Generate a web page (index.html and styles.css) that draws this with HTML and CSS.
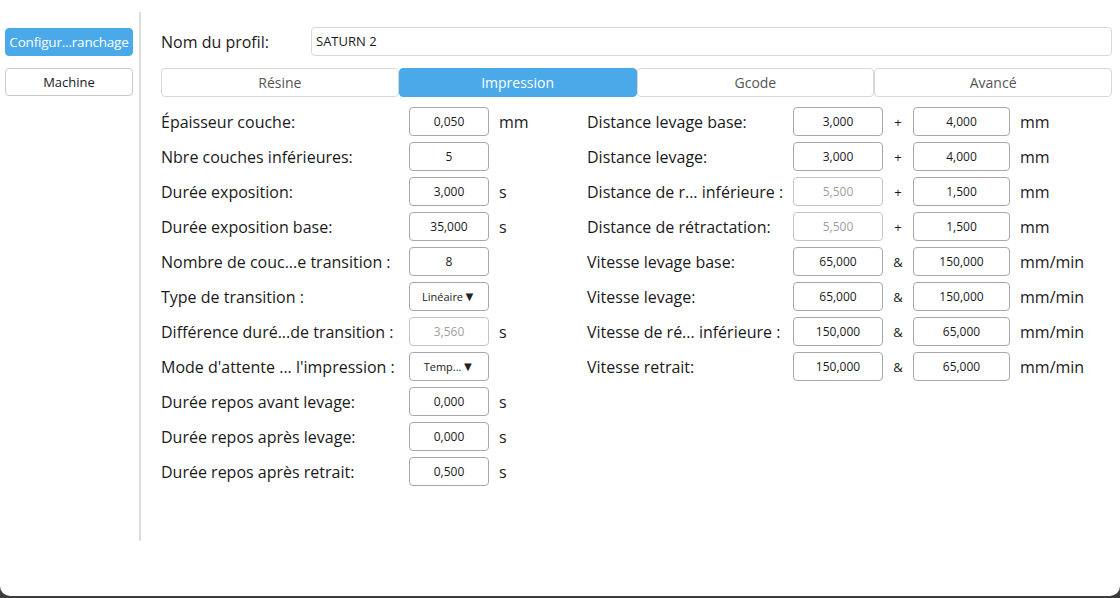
FILE: index.html
```html
<!DOCTYPE html>
<html lang="fr">
<head>
  <meta charset="UTF-8">
  <title>Configuration</title>
  <link rel="stylesheet" href="styles.css">
</head>
<body>
  <div class="window">
    <div class="sidebar">
      <div class="side-btn active">Configur...ranchage</div>
      <div class="side-btn">Machine</div>
    </div>
    <div class="divider"></div>
    <div class="main">
      <div class="profile">
        <span class="profile-label">Nom du profil:</span>
        <div class="profile-input">SATURN 2</div>
      </div>
      <div class="tabs">
        <div class="tab">Résine</div>
        <div class="tab active">Impression</div>
        <div class="tab">Gcode</div>
        <div class="tab">Avancé</div>
      </div>
      <div class="columns">
        <div class="col-left">
          <span class="lbl">Épaisseur couche:</span><div class="field">0,050</div><span class="unit">mm</span>
          <span class="lbl">Nbre couches inférieures:</span><div class="field">5</div><span class="unit"></span>
          <span class="lbl">Durée exposition:</span><div class="field">3,000</div><span class="unit">s</span>
          <span class="lbl">Durée exposition base:</span><div class="field">35,000</div><span class="unit">s</span>
          <span class="lbl">Nombre de couc...e transition :</span><div class="field">8</div><span class="unit"></span>
          <span class="lbl">Type de transition :</span><div class="field select">Linéaire<span class="arrow">▼</span></div><span class="unit"></span>
          <span class="lbl">Différence duré...de transition :</span><div class="field disabled">3,560</div><span class="unit">s</span>
          <span class="lbl">Mode d'attente ... l'impression :</span><div class="field select">Temp...<span class="arrow">▼</span></div><span class="unit"></span>
          <span class="lbl">Durée repos avant levage:</span><div class="field">0,000</div><span class="unit">s</span>
          <span class="lbl">Durée repos après levage:</span><div class="field">0,000</div><span class="unit">s</span>
          <span class="lbl">Durée repos après retrait:</span><div class="field">0,500</div><span class="unit">s</span>
        </div>
        <div class="col-right">
          <span class="lbl">Distance levage base:</span><div class="field">3,000</div><span class="sep">+</span><div class="field">4,000</div><span class="unit">mm</span>
          <span class="lbl">Distance levage:</span><div class="field">3,000</div><span class="sep">+</span><div class="field">4,000</div><span class="unit">mm</span>
          <span class="lbl">Distance de r... inférieure :</span><div class="field disabled">5,500</div><span class="sep">+</span><div class="field">1,500</div><span class="unit">mm</span>
          <span class="lbl">Distance de rétractation:</span><div class="field disabled">5,500</div><span class="sep">+</span><div class="field">1,500</div><span class="unit">mm</span>
          <span class="lbl">Vitesse levage base:</span><div class="field">65,000</div><span class="sep">&amp;</span><div class="field">150,000</div><span class="unit">mm/min</span>
          <span class="lbl">Vitesse levage:</span><div class="field">65,000</div><span class="sep">&amp;</span><div class="field">150,000</div><span class="unit">mm/min</span>
          <span class="lbl">Vitesse de ré... inférieure :</span><div class="field">150,000</div><span class="sep">&amp;</span><div class="field">65,000</div><span class="unit">mm/min</span>
          <span class="lbl">Vitesse retrait:</span><div class="field">150,000</div><span class="sep">&amp;</span><div class="field">65,000</div><span class="unit">mm/min</span>
        </div>
      </div>
    </div>
  </div>
</body>
</html>
```

FILE: styles.css
```css
html, body {
  margin: 0;
  padding: 0;
}
body {
  background-color: #3c3c3c;
  font-family: "Open Sans", "Noto Sans", Arial, sans-serif;
  color: #1a1a1a;
}
.window {
  background-color: #ffffff;
  height: 596px;
  border-radius: 0 0 10px 10px;
  display: flex;
  align-items: flex-start;
}
.sidebar {
  width: 128px;
  padding: 28px 0 0 5px;
  display: flex;
  flex-direction: column;
  gap: 12px;
}
.side-btn {
  height: 26px;
  line-height: 26px;
  border: 1px solid #c8c8c8;
  border-radius: 4px;
  text-align: center;
  font-size: 13px;
  white-space: nowrap;
  overflow: hidden;
}
.side-btn.active {
  background-color: #4aa9e9;
  border-color: #4aa9e9;
  color: #ffffff;
  font-size: 13.5px;
  letter-spacing: -0.2px;
}
.divider {
  width: 2px;
  height: 529px;
  margin: 12px 0 0 6px;
  background-color: #dcdcdc;
}
.main {
  flex: 1;
  padding: 27px 8px 0 20px;
}
.profile {
  display: flex;
  align-items: center;
  height: 29px;
}
.profile-label {
  width: 150px;
  font-size: 16px;
}
.profile-input {
  flex: 1;
  height: 27px;
  line-height: 27px;
  border: 1px solid #d8d8d8;
  border-radius: 4px;
  padding-left: 4px;
  font-size: 13px;
}
.tabs {
  display: flex;
  margin-top: 12px;
  height: 29px;
}
.tab {
  flex: 1;
  border: 1px solid #d8d8d8;
  border-radius: 4px;
  text-align: center;
  line-height: 27px;
  font-size: 14px;
  color: #555555;
}
.tab.active {
  background-color: #4aa9e9;
  border-color: #4aa9e9;
  color: #ffffff;
}
.columns {
  display: flex;
  margin-top: 10px;
}
.col-left {
  display: grid;
  grid-template-columns: 248px 80px 98px;
  grid-auto-rows: 29px;
  row-gap: 6px;
  align-items: center;
}
.col-right {
  display: grid;
  grid-template-columns: 206px 90px 30px 97px auto;
  grid-auto-rows: 29px;
  row-gap: 6px;
  align-items: center;
}
.lbl {
  font-size: 16px;
  white-space: nowrap;
}
.field {
  height: 27px;
  line-height: 27px;
  border: 1px solid #a8a8a8;
  border-radius: 4px;
  text-align: center;
  font-size: 12px;
}
.field.disabled {
  color: #a0a0a0;
  border-color: #c4c4c4;
}
.field.select {
  font-size: 11px;
}
.arrow {
  font-size: 13px;
  color: #222222;
}
.unit {
  font-size: 16px;
  padding-left: 10px;
}
.sep {
  text-align: center;
  font-size: 13px;
}
```
